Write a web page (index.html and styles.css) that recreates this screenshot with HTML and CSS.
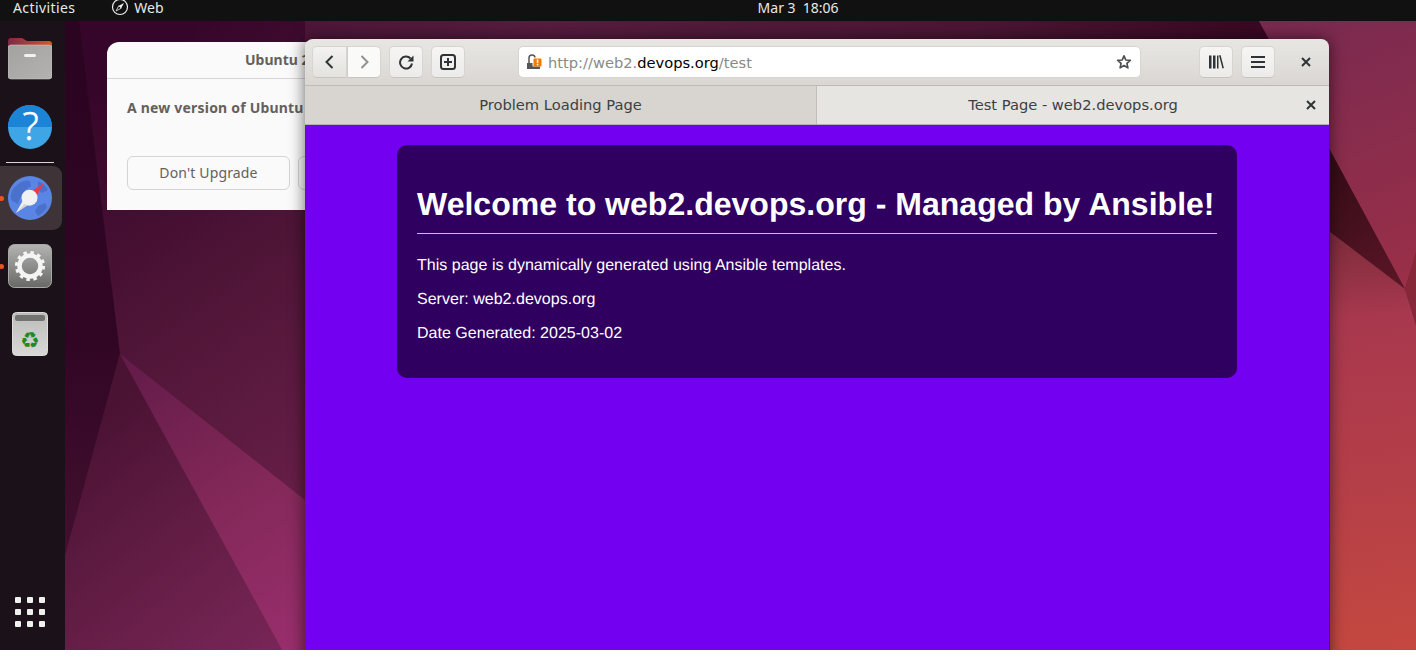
FILE: index.html
```html
<!DOCTYPE html>
<html lang="en">
<head>
<meta charset="utf-8">
<title>Test Page - web2.devops.org</title>
<link rel="stylesheet" href="styles.css">
</head>
<body>
<div class="screen">
  <svg class="wallpaper" viewBox="0 0 1416 650" preserveAspectRatio="none" aria-hidden="true">
    <defs>
      <linearGradient id="gMain" gradientUnits="userSpaceOnUse" x1="85" y1="100" x2="340" y2="480">
        <stop offset="0" stop-color="#36062a"/><stop offset=".5" stop-color="#4f1537"/><stop offset="1" stop-color="#681f47"/>
      </linearGradient>
      <linearGradient id="gStrip" gradientUnits="userSpaceOnUse" x1="305" y1="0" x2="1259" y2="0">
        <stop offset="0" stop-color="#4e1638"/><stop offset=".25" stop-color="#571c3e"/><stop offset=".7" stop-color="#4c1634"/><stop offset="1" stop-color="#3a0822"/>
      </linearGradient>
      <linearGradient id="gLeft" gradientUnits="userSpaceOnUse" x1="90" y1="21" x2="75" y2="555">
        <stop offset="0" stop-color="#2a0420"/><stop offset=".6" stop-color="#310624"/><stop offset="1" stop-color="#43102f"/>
      </linearGradient>
      <linearGradient id="gBottom" gradientUnits="userSpaceOnUse" x1="90" y1="420" x2="270" y2="650">
        <stop offset="0" stop-color="#4a1233"/><stop offset=".5" stop-color="#621d44"/><stop offset="1" stop-color="#772556"/>
      </linearGradient>
      <linearGradient id="gLight" gradientUnits="userSpaceOnUse" x1="130" y1="365" x2="300" y2="640">
        <stop offset="0" stop-color="#641c4a"/><stop offset=".5" stop-color="#822858"/><stop offset="1" stop-color="#982e6c"/>
      </linearGradient>
      <linearGradient id="gUR" gradientUnits="userSpaceOnUse" x1="1300" y1="21" x2="1400" y2="280">
        <stop offset="0" stop-color="#7a2a50"/><stop offset="1" stop-color="#992f48"/>
      </linearGradient>
      <linearGradient id="gDark" gradientUnits="userSpaceOnUse" x1="1330" y1="170" x2="1405" y2="289">
        <stop offset="0" stop-color="#360c18"/><stop offset="1" stop-color="#5c1626"/>
      </linearGradient>
      <linearGradient id="gLR" gradientUnits="userSpaceOnUse" x1="1350" y1="235" x2="1390" y2="650">
        <stop offset="0" stop-color="#7e2c3c"/><stop offset=".2" stop-color="#a8384e"/><stop offset=".6" stop-color="#b53f48"/><stop offset="1" stop-color="#c44840"/>
      </linearGradient>
    </defs>
    <rect width="1416" height="650" fill="url(#gMain)"/>
    <polygon points="305,21 1259,21 1330,150 305,150" fill="url(#gStrip)"/>
    <polygon points="60,21 79,21 120,354 60,575" fill="url(#gLeft)"/>
    <polygon points="120,354 282,650 60,650 60,575" fill="url(#gBottom)"/>
    <polygon points="120,354 305,500 305,650 282,650" fill="url(#gLight)"/>
    <polygon points="1259,21 1416,21 1416,253 1405,289 1330,150" fill="url(#gUR)"/>
    <polygon points="1330,150 1405,289 1330,232" fill="url(#gDark)"/>
    <polygon points="1330,232 1405,289 1416,325 1416,650 1330,650" fill="url(#gLR)"/>
    <polygon points="1405,289 1416,253 1416,325" fill="#862838"/>
  </svg>

  <header class="topbar">
    <span class="activities">Activities</span>
    <span class="app">
      <svg class="app-icon" viewBox="0 0 18 18" aria-hidden="true">
        <circle cx="9" cy="9" r="7.5" fill="none" stroke="#eee" stroke-width="1.2"/>
        <path d="M13 5 L10.2 10.2 L7.8 7.8 Z" fill="#eee"/>
        <path d="M5 13 L7.8 7.8 L10.2 10.2 Z" fill="none" stroke="#eee" stroke-width=".8"/>
      </svg>
      Web
    </span>
    <span class="clock">Mar 3&nbsp; 18:06</span>
  </header>

  <div class="desktop">
    <nav class="dock">
      <div class="dock-item">
        <svg class="dock-icon" viewBox="0 0 44 44" aria-hidden="true">
          <defs>
            <linearGradient id="fTab" x1="0" y1="0" x2="1" y2="0"><stop offset="0" stop-color="#7d2a48"/><stop offset="1" stop-color="#d9562a"/></linearGradient>
            <linearGradient id="fBody" x1="0" y1="0" x2="1" y2="1"><stop offset="0" stop-color="#a4a2a0"/><stop offset="1" stop-color="#b4b2b0"/></linearGradient>
          </defs>
          <path d="M0 4a3 3 0 0 1 3-3h11l5 3h22a3 3 0 0 1 3 3v8H0z" fill="url(#fTab)"/>
          <path d="M0 11a3 3 0 0 1 3-3h38a3 3 0 0 1 3 3v28a3 3 0 0 1-3 3H3a3 3 0 0 1-3-3z" fill="url(#fBody)" stroke="#c8c6c4" stroke-width=".6"/>
          <rect x="16" y="17" width="12" height="3" rx="1.500" fill="#f2f2f2"/>
        </svg>
      </div>
      <div class="dock-item">
        <svg class="dock-icon" viewBox="0 0 44 44" aria-hidden="true">
          <circle cx="22" cy="22" r="22" fill="#3ea6e6"/>
          <path d="M0 22a22 22 0 0 1 44 0z" fill="#1c84d6"/>
          <text x="22.500" y="35" text-anchor="middle" class="help-mark">?</text>
        </svg>
      </div>
      <div class="dock-sep"></div>
      <div class="dock-item">
        <span class="running"></span>
        <div class="active-tile">
          <svg class="dock-icon" viewBox="0 0 44 44" aria-hidden="true">
            <circle cx="22" cy="22" r="22" fill="#5a85e4"/>
            <path d="M9 9c6-5 10-5 13-4l1 5-6 4 2 6-7 2-2 6-7-4c-1-6 1-11 6-15zM30 5c5 2 8 5 10 9l-6 3-4-3zM30 30l7-3 2 4c-2 4-5 7-9 9l-3-5z" fill="#4a72cc"/>
            <path d="M36 7 L18.400 18.600 L25.600 25.400 Z" fill="#e83a4a"/>
            <path d="M8 37 L18.400 18.600 L25.600 25.400 Z" fill="#d4d4d4"/>
            <path d="M8 37 L18.400 18.600 L22 22 Z" fill="#f0f0f0"/>
            <circle cx="21.500" cy="21.700" r="8" fill="#f1f1f1"/>
          </svg>
        </div>
      </div>
      <div class="dock-item">
        <span class="running"></span>
        <svg class="dock-icon" viewBox="0 0 44 44" aria-hidden="true">
          <defs>
            <linearGradient id="sBg" x1="0" y1="0" x2="0" y2="1"><stop offset="0" stop-color="#b4b4b2"/><stop offset="1" stop-color="#686866"/></linearGradient>
          </defs>
          <rect x=".5" y=".5" width="43" height="43" rx="6" fill="url(#sBg)" stroke="#a8a8a6"/>
          <circle cx="22" cy="22" r="10.500" fill="none" stroke="#f4f4f4" stroke-width="4.500"/>
          <circle cx="22" cy="22" r="13.500" fill="none" stroke="#f4f4f4" stroke-width="3.200" stroke-dasharray="3.500 3.570"/>
        </svg>
      </div>
      <div class="dock-item">
        <svg class="dock-trash" viewBox="0 0 36 44" aria-hidden="true">
          <defs>
            <linearGradient id="tBg" x1="0" y1="0" x2="0" y2="1"><stop offset="0" stop-color="#bcbcba"/><stop offset="1" stop-color="#d8d8d6"/></linearGradient>
          </defs>
          <rect x=".5" y=".5" width="35" height="43" rx="4" fill="url(#tBg)" stroke="#dcdcda"/>
          <rect x="3" y="3" width="30" height="6" rx="2" fill="#737371"/>
          <text x="18" y="36" text-anchor="middle" class="recycle">♻</text>
        </svg>
      </div>
      <div class="dock-item dock-apps">
        <div class="apps-grid">
          <i></i><i></i><i></i><i></i><i></i><i></i><i></i><i></i><i></i>
        </div>
      </div>
    </nav>
  </div>

  <section class="dialog">
    <div class="dialog-title">Ubuntu 2</div>
    <div class="dialog-body">
      <p class="dialog-text">A new version of Ubuntu</p>
      <div class="dialog-actions">
        <span class="dialog-btn">Don't Upgrade</span>
        <span class="dialog-btn"></span>
      </div>
    </div>
  </section>

  <main class="browser">
    <div class="toolbar">
      <div class="btn-group">
        <span class="tool tool-back">
          <svg class="ic" viewBox="0 0 16 16" aria-hidden="true"><path d="M10.500 2 L4.500 8 L10.500 14" fill="none" stroke="#2e3436" stroke-width="2"/></svg>
        </span>
        <span class="tool tool-forward">
          <svg class="ic" viewBox="0 0 16 16" aria-hidden="true"><path d="M5.500 2 L11.500 8 L5.500 14" fill="none" stroke="#8f9192" stroke-width="2"/></svg>
        </span>
      </div>
      <span class="tool">
        <svg class="ic" viewBox="0 0 16 16" aria-hidden="true"><path d="M14 9.500A6 6 0 1 1 12.500 4.500" fill="none" stroke="#2e3436" stroke-width="2"/><path d="M15.500 1.500V7.500H9.500z" fill="#2e3436"/></svg>
      </span>
      <span class="tool">
        <svg class="ic" viewBox="0 0 16 16" aria-hidden="true"><rect x="1" y="1" width="14" height="14" rx="2.500" fill="none" stroke="#2e3436" stroke-width="2"/><path d="M8 4v8M4 8h8" stroke="#2e3436" stroke-width="2"/></svg>
      </span>
      <div class="urlbar">
        <svg class="ic lock" viewBox="0 0 16 16" aria-hidden="true">
          <path d="M2 9V4a3 3 0 0 1 6 0v1" fill="none" stroke="#555" stroke-width="1.500"/>
          <rect x="0" y="9" width="13" height="6" fill="#555"/>
          <rect x="5.500" y="3.500" width="9.500" height="9" rx="1" fill="#fff"/>
          <rect x="6.500" y="4.500" width="8" height="8" rx="1" fill="#f57900"/>
          <rect x="9.800" y="5.500" width="1.500" height="3.500" fill="#fff"/><rect x="9.800" y="9.800" width="1.500" height="1.500" fill="#fff"/>
        </svg>
        <span class="url"><span class="url-dim">http://web2.</span>devops.org<span class="url-dim">/test</span></span>
        <svg class="ic star" viewBox="0 0 16 16" aria-hidden="true"><path d="M8 1.800 L9.800 6 L14.300 6.400 L10.900 9.400 L11.900 13.900 L8 11.500 L4.100 13.900 L5.100 9.400 L1.700 6.400 L6.200 6 Z" fill="none" stroke="#4d5052" stroke-width="1.700" stroke-linejoin="round"/></svg>
      </div>
      <span class="tool">
        <svg class="ic" viewBox="0 0 16 16" aria-hidden="true"><path d="M1 1.500h2.500v13H1zM5 1.500h2.500v13H5zM9 1.500h1.500v13H9z" fill="#2e3436"/><path d="M11.800 1.300l3.400 13" stroke="#2e3436" stroke-width="1.500"/></svg>
      </span>
      <span class="tool tool-menu">
        <svg class="ic" viewBox="0 0 16 16" aria-hidden="true"><path d="M1 3h14M1 8h14M1 13h14" stroke="#2e3436" stroke-width="2"/></svg>
      </span>
      <span class="win-close">
        <svg class="x" viewBox="0 0 10 10" aria-hidden="true"><path d="M1 1l8 8M9 1l-8 8" stroke="#2e3436" stroke-width="2"/></svg>
      </span>
    </div>
    <div class="tabs">
      <div class="tab tab-bg">Problem Loading Page</div>
      <div class="tab tab-on">Test Page - web2.devops.org
        <svg class="x tab-x" viewBox="0 0 10 10" aria-hidden="true"><path d="M1 1l8 8M9 1l-8 8" stroke="#2e3436" stroke-width="2"/></svg>
      </div>
    </div>
    <div class="content">
      <article class="card">
        <h1 class="card-title">Welcome to web2.devops.org - Managed by Ansible!</h1>
        <p class="card-text">This page is dynamically generated using Ansible templates.</p>
        <p class="card-text">Server: web2.devops.org</p>
        <p class="card-text">Date Generated: 2025-03-02</p>
      </article>
    </div>
  </main>
</div>
</body>
</html>
```

FILE: styles.css
```css
* { box-sizing: border-box; }

html, body {
  margin: 0;
  height: 100%;
  background: #fff;
  overflow: hidden;
}

.screen {
  position: relative;
  width: 1416px;
  height: 650px;
  overflow: hidden;
  display: flex;
  flex-direction: column;
  font-family: "Noto Sans", "Open Sans", sans-serif;
}

.wallpaper {
  position: absolute;
  inset: 0;
  width: 100%;
  height: 100%;
}

/* top bar */
.topbar {
  position: relative;
  flex: 0 0 21px;
  display: flex;
  align-items: flex-start;
  background: #111;
  color: #e8e8e6;
  font-size: 14px;
  line-height: 15px;
  padding-left: 13px;
}

.activities { letter-spacing: .4px; }

.app {
  display: flex;
  align-items: flex-start;
  gap: 5px;
  margin-left: 36px;
}

.app-icon {
  width: 18px;
  height: 18px;
  margin-top: -2px;
}

.clock { margin-left: 594px; }

/* dock */
.desktop {
  position: relative;
  flex: 1;
  display: flex;
  min-height: 0;
}

.dock {
  width: 65px;
  display: flex;
  flex-direction: column;
  align-items: stretch;
  padding: 4px 0;
  background: #1b1118;
}

.dock-item {
  position: relative;
  flex: 0 0 68px;
  display: flex;
  align-items: center;
  padding-left: 8px;
}

.dock-icon {
  width: 44px;
  height: 44px;
  display: block;
}

.dock-trash {
  width: 36px;
  height: 44px;
  margin-left: 4px;
}

.dock-sep {
  flex: 0 0 3px;
  margin: 0 11px 0 6px;
  background: linear-gradient(#1b1118 1px, #d8d6d6 1px, #d8d6d6 2px, #1b1118 2px);
}

.active-tile {
  position: absolute;
  left: 0;
  top: 2px;
  width: 62px;
  height: 64px;
  padding: 10px 0 0 8px;
  background: #3e3337;
  border-radius: 0 9px 9px 0;
}

.running {
  position: absolute;
  z-index: 1;
  left: -1px;
  top: 32px;
  width: 5px;
  height: 5px;
  border-radius: 50%;
  background: #e95420;
}

.dock-apps {
  margin-top: auto;
  padding-left: 15px;
}

.apps-grid {
  display: grid;
  grid-template-columns: repeat(3, 6px);
  gap: 6px;
}

.apps-grid i {
  height: 6px;
  border-radius: 1px;
  background: #f0f0ee;
}

.help-mark {
  font-family: "Noto Sans", sans-serif;
  font-size: 38px;
  font-weight: 300;
  fill: #fff;
  stroke: #fff;
  stroke-width: .5px;
}

.recycle {
  font-family: "DejaVu Sans", sans-serif;
  font-size: 22px;
  fill: #1f8a1f;
}

/* background dialog */
.dialog {
  position: absolute;
  left: 107px;
  top: 42px;
  width: 290px;
  height: 168px;
  background: #fafafa;
  border-radius: 12px 12px 0 0;
  color: #66605c;
  font-size: 14px;
}

.dialog-title {
  height: 37px;
  padding: 8px 0 0 138px;
  font-weight: 700;
  line-height: 20px;
  border-bottom: 1px solid #d8d6d4;
}

.dialog-body { padding: 19px 20px 0; }

.dialog-text {
  margin: 0 0 38px;
  font-weight: 700;
  line-height: 20px;
  letter-spacing: .2px;
}

.dialog-actions {
  display: flex;
  gap: 8px;
}

.dialog-btn {
  flex: 0 0 163px;
  height: 34px;
  border: 1px solid #d6d4d2;
  border-radius: 6px;
  text-align: center;
  line-height: 32px;
  letter-spacing: .15px;
}

/* browser window */
.browser {
  position: absolute;
  left: 305px;
  top: 39px;
  width: 1024px;
  height: 640px;
  display: flex;
  flex-direction: column;
  border-radius: 8px 8px 0 0;
  box-shadow: 0 0 16px rgba(0, 0, 0, .6);
  font-family: "DejaVu Sans", sans-serif;
  color: #2e3436;
}

.toolbar {
  flex: 0 0 47px;
  display: flex;
  align-items: flex-start;
  padding: 7px 0 0 7px;
  background: linear-gradient(#e8e6e3, #dad7d3);
  border-radius: 8px 8px 0 0;
  border-bottom: 1px solid #bfbab5;
}

.tool {
  flex: 0 0 34px;
  height: 32px;
  display: flex;
  align-items: center;
  justify-content: center;
  background: linear-gradient(#f6f5f4, #edebe9);
  border: 1px solid #d8d4d0;
  border-bottom-color: #c8c3be;
  border-radius: 5px;
  margin-right: 8px;
}

.tool-menu { margin-right: 0; }

.btn-group {
  display: flex;
  margin-right: 8px;
}

.btn-group .tool { margin: 0; flex: 0 0 35px; }
.btn-group .tool-forward { flex-basis: 34px; }
.tool-back { border-radius: 5px 0 0 5px; background: linear-gradient(#f3f2f0, #e4e2df); }
.tool-forward { border-radius: 0 5px 5px 0; border-left: 1px solid #d0ccc8; background: #fafaf9; }

.ic {
  width: 16px;
  height: 16px;
  display: block;
}

.urlbar {
  flex: 0 0 623px;
  height: 32px;
  margin: 0 58px 0 45px;
  display: flex;
  align-items: center;
  padding: 0 8px 0 8px;
  background: #fff;
  border: 1px solid #d8d4d0;
  border-radius: 5px;
  font-size: 14.667px;
}

.url {
  flex: 1;
  margin-left: 5px;
  color: #000;
}

.url-dim { color: #888a85; }

.win-close {
  flex: 0 0 10px;
  height: 32px;
  margin-left: 26px;
  display: flex;
  align-items: center;
}

.x {
  width: 10px;
  height: 10px;
  display: block;
}

.tabs {
  flex: 0 0 39px;
  display: flex;
  font-size: 14.667px;
  color: #3c4143;
  border-bottom: 1px solid #b5b0ab;
}

.tab {
  position: relative;
  flex: 1;
  display: flex;
  align-items: center;
  justify-content: center;
  padding-bottom: 1px;
}

.tab-bg { flex: 0 0 512px; background: #d8d5d0; border-right: 1px solid #c2bdb8; }
.tab-on { background: #e6e5e2; }

.tab-x {
  position: absolute;
  right: 13px;
  top: 14px;
}

.content {
  flex: 1;
  padding-top: 20px;
  background: #7300f0;
  font-family: "Liberation Sans", Arial, sans-serif;
  color: #fff;
  text-rendering: geometricPrecision;
}

.card {
  width: 840px;
  margin: 0 auto;
  padding: 20px;
  background: #2f005f;
  border-radius: 10px;
}

.card-title {
  margin: 21.440px 0;
  padding-bottom: 10px;
  font-size: 32px;
  line-height: 37px;
  font-weight: 700;
  letter-spacing: .02px;
  border-bottom: 1px solid #c9bcd6;
}

.card-text {
  margin: 14px 0;
  font-size: 16px;
  line-height: 20px;
  letter-spacing: .02px;
}
```
